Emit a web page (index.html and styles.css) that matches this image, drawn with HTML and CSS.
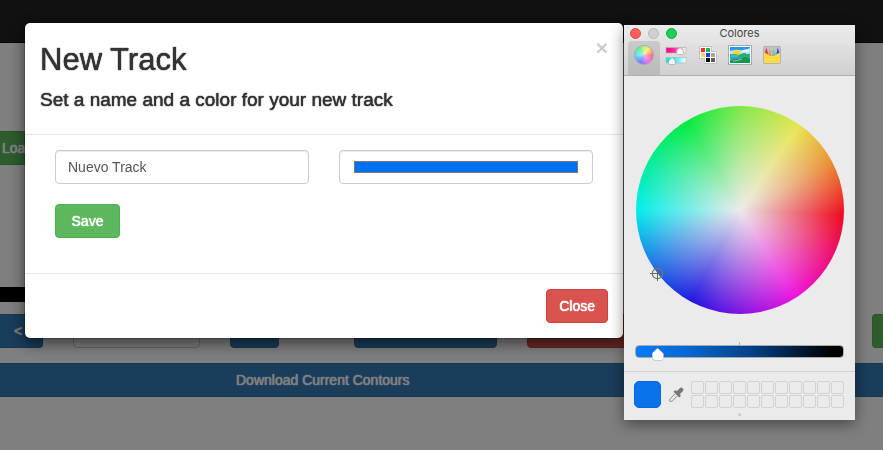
FILE: index.html
```html
<!DOCTYPE html>
<html lang="en">
<head>
<meta charset="utf-8">
<title>New Track</title>
<link rel="stylesheet" href="styles.css">
</head>
<body>
<nav class="navbar"></nav>
<main class="page">
  <button class="btn btn-success load">Load</button>
  <div class="timeline"></div>
  <div class="controls">
    <button class="btn btn-primary prev">&lt;</button>
    <input class="form-control frame" type="text" aria-label="Frame">
    <button class="btn btn-primary next" aria-label="Next"></button>
    <button class="btn btn-primary action" aria-label="Action"></button>
    <button class="btn btn-danger remove" aria-label="Remove"></button>
    <button class="btn btn-success add" aria-label="Add"></button>
  </div>
  <button class="btn btn-primary download">Download Current Contours</button>
</main>

<div class="backdrop">
  <section class="modal" role="dialog" aria-labelledby="modal-title">
    <header class="modal-header">
      <div>
        <h2 id="modal-title">New Track</h2>
        <h4>Set a name and a color for your new track</h4>
      </div>
      <button class="dismiss" aria-label="Dismiss">×</button>
    </header>
    <form class="modal-body">
      <div class="fields">
        <input class="form-control" type="text" value="Nuevo Track" aria-label="Name">
        <input class="form-control" type="color" value="#006ff0" aria-label="Color">
      </div>
      <button class="btn btn-success save" type="button">Save</button>
    </form>
    <footer class="modal-footer">
      <button class="btn btn-danger">Close</button>
    </footer>
  </section>
</div>

<aside class="picker" aria-label="Colores">
  <header class="picker-head">
    <div class="titlebar">
      <div class="lights">
        <button class="light red" aria-label="Close window"></button>
        <button class="light gray" aria-label="Minimize"></button>
        <button class="light green" aria-label="Zoom"></button>
      </div>
      <span class="picker-title">Colores</span>
    </div>
    <div class="tabs">
      <button class="tab selected" aria-label="Wheel"><span class="mini-wheel"></span></button>
      <button class="tab" aria-label="Sliders">
        <svg width="22" height="20" viewBox="0 0 22 20">
          <defs>
            <linearGradient id="pink"><stop offset="0" stop-color="#ff0080"/><stop offset=".4" stop-color="#ff2a98"/><stop offset="1" stop-color="#fff"/></linearGradient>
            <linearGradient id="cyan"><stop offset="0" stop-color="#00e4f4"/><stop offset=".4" stop-color="#32e9f5"/><stop offset="1" stop-color="#fff"/></linearGradient>
          </defs>
          <rect x="1" y="2.500" width="20" height="5.500" fill="url(#pink)" stroke="#b5b5b5" stroke-width=".7"/>
          <rect x="1" y="12.500" width="20" height="5.500" fill="url(#cyan)" stroke="#b5b5b5" stroke-width=".7"/>
          <path d="M15 2.500l3.300 3.200V8.500q0 1-1 1h-4.600q-1 0-1-1V5.700z" fill="#fff" stroke="#999" stroke-width=".6"/>
          <path d="M7 12.500l3.300 3.200V18.500q0 1-1 1H4.700q-1 0-1-1v-2.800z" fill="#fff" stroke="#999" stroke-width=".6"/>
        </svg>
      </button>
      <button class="tab" aria-label="Palettes">
        <svg width="20" height="20" viewBox="0 0 20 20">
          <path d="M1.500 1.500h12v5h5v12h-12v-5h-5z" fill="#fff" stroke="#b9b9b9" stroke-width=".8"/>
          <path fill="#f22c30" d="M3 3h4v4H3z"/><path fill="#0bc24d" d="M8 3h4v4H8z"/>
          <path fill="#fdd65b" d="M3 8h4v4H3z"/><path fill="#2440ed" d="M8 8h4v4H8z"/>
          <path fill="#a5a5a8" d="M13 8h4v4h-4z"/><path fill="#000" d="M8 13h4v4H8z"/>
          <path fill="#5c5c60" d="M13 13h4v4h-4z"/>
        </svg>
      </button>
      <button class="tab" aria-label="Image">
        <svg width="24" height="20" viewBox="0 0 24 20">
          <path d="M.5.5h23v19H.500z" fill="#fff" stroke="#aaa"/>
          <path fill="#2898ee" d="M2 2h20v16H2z"/>
          <path fill="#b8e4f8" d="M2 6q6-2 10-1t10-2v6H2z"/>
          <path fill="#fff" d="M14 6q3-3 7-1v2h-7z" opacity=".7"/>
          <circle cx="9" cy="8" r="3.200" fill="#f5d52c"/>
          <path fill="#32aa68" d="M2 10q4-2 8 0 3 0 5-2l2 0 5 3v3H2z"/>
          <path fill="#27a6dd" d="M2 12q8-2 13 1l7-1v3l-20 0z"/>
          <path fill="#119650" d="M2 16q5-3 9-2l7-2 4 2v4H2z"/>
          <path d="M5 16q5 0 9-2M3 11l7 0" stroke="#74d393" fill="none"/>
        </svg>
      </button>
      <button class="tab" aria-label="Pencils">
        <svg width="18" height="20" viewBox="0 0 18 20">
          <rect x=".4" y="1.400" width="17.200" height="17.200" rx="1" fill="#c1c1c1" stroke="#aaa" stroke-width=".8"/>
          <path fill="#e93942" d="M3.300 2.500l2 6.500v3H1.500V9z"/><path fill="#f68b45" d="M6.500 4l1.800 7v2H4.800z"/>
          <path fill="#64ce8b" d="M10.500 4l2 7v2H8.300z"/><path fill="#98aaff" d="M12.500 5l1 6h-2z"/>
          <path fill="#343edc" d="M14.800 2.500L16.600 9v3h-3.800z"/>
          <path fill="#ffdc45" d="M1 8q2.500 0 4.500 2 3.500 2.500 7 0 2-2 4.500-2v10H1z"/>
        </svg>
      </button>
    </div>
  </header>
  <div class="wheel">
    <svg class="crosshair" width="15" height="15" viewBox="0 0 15 15">
      <circle cx="7.500" cy="7.500" r="5.200" fill="none" stroke="#777" stroke-width="1.200"/>
      <path d="M7.500 0v15M0 7.500h15" stroke="#666"/>
    </svg>
  </div>
  <div class="brightness">
    <span class="tick"></span>
    <input class="slider" type="range" min="0" max="100" value="8" aria-label="Brightness">
  </div>
  <div class="picker-foot">
    <div class="current"></div>
    <button class="dropper" aria-label="Pick a screen color">
      <svg width="16" height="16" viewBox="0 0 16 16">
        <path d="M5.500 4.800l1.500-1.600 2 .8 2.500-2.600q1.800-1.500 3.200-.1t-.1 3.200L12 7l.8 2-1.600 1.500z" fill="#777"/>
        <path d="M7.300 6.600l-5 5-.9 2.200.8.800 2.200-.8 5.100-5" fill="none" stroke="#888"/>
      </svg>
    </button>
    <div class="swatches">
      <i></i><i></i><i></i><i></i><i></i><i></i><i></i><i></i><i></i><i></i><i></i>
      <i></i><i></i><i></i><i></i><i></i><i></i><i></i><i></i><i></i><i></i><i></i>
    </div>
  </div>
  <span class="grip"></span>
</aside>
</body>
</html>
```
FILE: styles.css
```css
* { box-sizing: border-box; }
body {
  margin: 0;
  overflow: hidden;
  background: #fff;
  color: #333;
  font: 14px/20px "Liberation Sans", Arial, sans-serif;
}
button, input { font: inherit; margin: 0; }
.navbar { height: 43px; background: #222; border-bottom: 1px solid #080808; }

.btn {
  height: 34px;
  padding: 6px 12px;
  border: 1px solid transparent;
  border-radius: 4px;
  color: #fff;
  text-shadow: 0 0 1px currentColor, 0 0 1px currentColor;
}
.btn-primary { background: #337ab7; border-color: #2e6da4; }
.btn-success { background: #5cb85c; border-color: #4cae4c; }
.btn-danger { background: #d9534f; border-color: #d43f3a; }
.form-control {
  width: 100%;
  min-width: 0;
  height: 34px;
  padding: 6px 12px;
  border: 1px solid #ccc;
  border-radius: 4px;
  background: #fff;
  color: #555;
  box-shadow: inset 0 1px 1px rgba(0, 0, 0, .075);
}

.page { display: flex; flex-direction: column; padding-top: 88px; }
.load {
  width: 120px;
  padding-left: 2px;
  border-left: 0;
  border-radius: 0 4px 4px 0;
  text-align: left;
}
.timeline { width: 60%; height: 15px; margin: 122px 0 12px; background: #000; }
.controls { display: flex; gap: 30px; margin-bottom: 15px; }
.prev {
  width: 43px;
  padding-left: 14px;
  border-left: 0;
  border-radius: 0 4px 4px 0;
  text-align: left;
}
.frame { width: 127px; }
.next { width: 49px; }
.action { width: 143px; margin-left: 45px; }
.remove { flex: 1; }
.add { width: 11px; padding: 0; border-right: 0; border-radius: 4px 0 0 4px; }
.download {
  padding-left: 236px;
  border-width: 1px 0;
  border-radius: 0;
  text-align: left;
}

.backdrop { position: fixed; inset: 0; padding: 22px 24px; background: rgba(0, 0, 0, .5); }
.modal {
  max-width: 600px;
  border: 1px solid rgba(0, 0, 0, .2);
  border-radius: 6px;
  background: #fff;
  background-clip: padding-box;
  box-shadow: 0 5px 15px rgba(0, 0, 0, .5);
}
.modal-header {
  display: flex;
  justify-content: space-between;
  align-items: flex-start;
  padding: 20px 15px 24px;
  border-bottom: 1px solid #e5e5e5;
}
h2, h4 { margin: 0; font-weight: 400; text-shadow: 0 0 1px currentColor, 0 0 1px currentColor; }
h2 { margin-bottom: 14px; font-size: 31px; line-height: 33px; }
h4 { font-size: 19px; line-height: 20px; }
.dismiss {
  padding: 0;
  border: 0;
  background: none;
  color: #ccc;
  font-size: 21px;
  font-weight: 700;
  line-height: 10px;
}
.modal-body { padding: 15px 30px 35px; }
.fields { display: grid; grid-template-columns: 1fr 1fr; gap: 30px; margin-bottom: 20px; }
.save { width: 65px; }
.modal-footer { padding: 15px; border-top: 1px solid #e5e5e5; text-align: right; }
.modal-footer .btn { display: block; margin-left: auto; }
input[type="color"]::-webkit-color-swatch-wrapper { padding: 4px 2px; }
input[type="color"]::-webkit-color-swatch { border: 1px solid #777; border-radius: 0; }

.picker {
  position: absolute;
  top: 25px;
  left: 624px;
  width: 231px;
  background: #ebebeb;
  box-shadow: 0 4px 14px rgba(0, 0, 0, .45);
}
.picker-head { background: linear-gradient(#ececec, #d0d0d0); border-bottom: 1px solid #b0b0b0; }
.titlebar { display: grid; grid-template-columns: 1fr auto 1fr; align-items: center; height: 16px; padding: 0 6px; }
.lights { display: flex; gap: 7px; }
.light { width: 11px; height: 11px; padding: 0; border: 1px solid; border-radius: 50%; }
.red { background: #ff5f5c; border-color: #e2463f; }
.gray { background: #d0d0d0; border-color: #b9b9b9; }
.green { background: #20cb58; border-color: #12ac40; }
.picker-title { color: #444; font: 11px/16px Inter, sans-serif; }
.tabs { display: flex; padding-left: 4px; }
.tab {
  display: flex;
  justify-content: center;
  width: 32px;
  height: 34px;
  padding: 4px 0 0;
  border: 0;
  border-radius: 4px 4px 0 0;
  background: none;
}
.tab svg { flex: none; }
.tab.selected { background: linear-gradient(#cacaca, #b9b9b9); }
.mini-wheel, .wheel {
  border-radius: 50%;
  background:
    radial-gradient(closest-side, #ebebeb, rgba(235, 235, 235, 0)),
    conic-gradient(#7ee84a, #e9e54f 35deg, #ea8f35 62deg, #ee081c 93deg, #ee10e0 148deg, #1f14e0 208deg, #1a7ee8 241deg, #00efea 270deg, #00eb3c 329deg, #7ee84a);
}
.mini-wheel {
  width: 20px;
  height: 20px;
  border: 1px solid #aaa;
  background:
    radial-gradient(closest-side, rgba(255, 255, 255, .6), rgba(255, 255, 255, .2)),
    conic-gradient(#b0f040, #ffe040 35deg, #ff4050 93deg, #f040f0 148deg, #4050ff 208deg, #20e0f0 270deg, #30f070 329deg, #b0f040);
}
.wheel { position: relative; width: 208px; height: 208px; margin: 30px auto 28px; }
.crosshair { position: absolute; left: 7%; top: 77%; }
.brightness { display: flex; flex-direction: column; padding: 0 11px 13px; border-bottom: 1px solid #d2d2d2; }
.tick { width: 1px; height: 3px; margin: 0 auto; background: #b5b5b5; }
.slider {
  appearance: none;
  width: 100%;
  height: 13px;
  background: none;
}
.slider::-webkit-slider-runnable-track {
  height: 13px;
  border: 1px solid #aaa;
  border-radius: 4px;
  background: linear-gradient(90deg, #067bf8, #0468d2 25%, #003f82 57%, #000 95%);
}
.slider::-webkit-slider-thumb {
  appearance: none;
  width: 12px;
  height: 13px;
  margin-top: 2px;
  border: 1px solid #ccc;
  border-radius: 3px;
  background: #fff;
  clip-path: polygon(50% 0, 100% 45%, 100% 100%, 0 100%, 0 45%);
}
.picker-foot { display: flex; align-items: center; padding: 9px 11px 5px 10px; }
.current { width: 27px; height: 27px; border: 1px solid #0869da; border-radius: 5px; background: #0873ea; }
.dropper { display: flex; width: 16px; margin: 0 7px; padding: 0; border: 0; background: none; }
.swatches { flex: 1; display: grid; grid-template-columns: repeat(11, 1fr); gap: 1px; }
.swatches i { height: 13px; border: 1px solid #d2d2d2; border-radius: 2px; }
.grip { display: block; width: 3px; height: 3px; margin: 0 auto 4px; border-radius: 50%; background: #c8c8c8; }
```
